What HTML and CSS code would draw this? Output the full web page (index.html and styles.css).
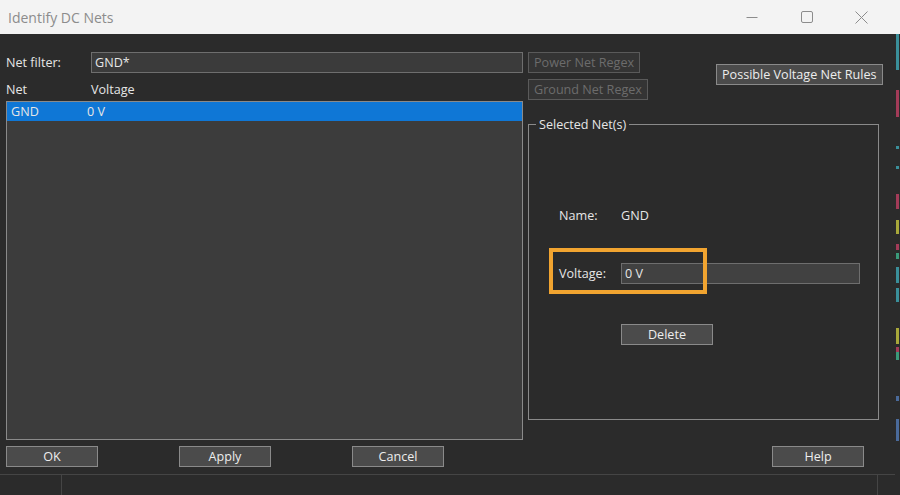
FILE: index.html
```html
<!DOCTYPE html>
<html lang="en">
<head>
    <meta charset="utf-8">
    <title>Identify DC Nets</title>
    <link rel="stylesheet" href="styles.css">
</head>
<body>
<div class="window">
    <div class="titlebar">
        <div class="title">Identify DC Nets</div>
        <div class="win-controls">
            <span class="win-btn">
                <svg width="12" height="12" viewBox="0 0 12 12"><path d="M0.5 6.5H11.5" stroke="#8c8c8c" stroke-width="1"/></svg>
            </span>
            <span class="win-btn">
                <svg width="12" height="12" viewBox="0 0 12 12"><rect x="0.5" y="0.5" width="11" height="11" rx="1.5" fill="none" stroke="#8c8c8c" stroke-width="1"/></svg>
            </span>
            <span class="win-btn">
                <svg width="13" height="13" viewBox="0 0 13 13"><path d="M0.5 0.5L12.5 12.5M12.5 0.5L0.5 12.5" stroke="#8c8c8c" stroke-width="1"/></svg>
            </span>
        </div>
    </div>

    <div class="body">
        <div class="main">
            <div class="left">
                <div class="filter-row">
                    <span class="filter-label">Net filter:</span>
                    <div class="input filter-input">GND*</div>
                </div>
                <div class="list-head">
                    <span class="col-net">Net</span>
                    <span>Voltage</span>
                </div>
                <div class="listbox">
                    <div class="list-row selected">
                        <span class="col-net">GND</span>
                        <span>0 V</span>
                    </div>
                </div>
            </div>

            <div class="right">
                <div class="right-top">
                    <div class="regex-btns">
                        <div class="btn disabled">Power Net Regex</div>
                        <div class="btn disabled">Ground Net Regex</div>
                    </div>
                    <div class="btn rules-btn">Possible Voltage Net Rules</div>
                </div>

                <fieldset class="group">
                    <legend>Selected Net(s)</legend>
                    <div class="field-row name-row">
                        <span class="field-label">Name:</span>
                        <span>GND</span>
                    </div>
                    <div class="field-row voltage-row">
                        <span class="field-label">Voltage:</span>
                        <div class="input voltage-input">0 V</div>
                        <div class="highlight"></div>
                    </div>
                    <div class="field-row delete-row">
                        <div class="btn delete-btn">Delete</div>
                    </div>
                </fieldset>
            </div>
        </div>

        <div class="footer">
            <div class="btn foot-btn">OK</div>
            <div class="btn foot-btn">Apply</div>
            <div class="btn foot-btn">Cancel</div>
            <div class="btn foot-btn help-btn">Help</div>
        </div>
    </div>

    <div class="statusbar">
        <div class="status-cell first"></div>
        <div class="status-cell grow"></div>
        <div class="status-cell last"></div>
    </div>
</div>

<div class="edge-strip">
    <i class="mk teal" style="top: 0; height: 36px"></i>
    <i class="mk red" style="top: 56px; height: 27px"></i>
    <i class="mk teal" style="top: 112px; height: 3px"></i>
    <i class="mk teal" style="top: 132px; height: 3px"></i>
    <i class="mk red" style="top: 160px; height: 15px"></i>
    <i class="mk yellow" style="top: 186px; height: 14px"></i>
    <i class="mk red" style="top: 210px; height: 6px"></i>
    <i class="mk green" style="top: 219px; height: 6px"></i>
    <i class="mk teal" style="top: 233px; height: 16px"></i>
    <i class="mk teal" style="top: 254px; height: 14px"></i>
    <i class="mk yellow" style="top: 294px; height: 16px"></i>
    <i class="mk red" style="top: 313px; height: 5px"></i>
    <i class="mk green" style="top: 318px; height: 8px"></i>
    <i class="mk blue" style="top: 362px; height: 5px"></i>
    <i class="mk blue" style="top: 385px; height: 22px"></i>
</div>
</body>
</html>
```

FILE: styles.css
```css
* {
    margin: 0;
    padding: 0;
    box-sizing: border-box;
}

html, body {
    width: 900px;
    height: 495px;
    overflow: hidden;
}

body {
    position: relative;
    background-color: #2b2b2b;
    font-family: 'Open Sans', 'Noto Sans', 'Liberation Sans', sans-serif;
    font-size: 12.6px;
    line-height: 17px;
    color: #e6e6e6;
}

.window {
    width: 895px;
    height: 495px;
    display: flex;
    flex-direction: column;
}

/* title bar */
.titlebar {
    height: 34px;
    flex: none;
    display: flex;
    align-items: center;
    background-color: #f3f3f3;
    width: 900px;
}

.title {
    padding-left: 8px;
    font-size: 14px;
    color: #8c8c8c;
    flex: 1;
}

.win-controls {
    display: flex;
    align-items: center;
    padding-right: 11px;
}

.win-btn {
    display: flex;
    width: 55px;
    justify-content: center;
}

/* dialog body */
.body {
    flex: 1;
    display: flex;
    flex-direction: column;
    padding: 18px 0 0 6px;
}

.main {
    display: flex;
    gap: 5px;
}

.left {
    width: 517px;
    display: flex;
    flex-direction: column;
}

.filter-row {
    display: flex;
    align-items: center;
    height: 21px;
}

.filter-label {
    width: 85px;
}

.input {
    height: 21px;
    line-height: 19px;
    padding-left: 3px;
    background-color: #3b3b3b;
    border: 1px solid #6e6e6e;
    color: #e6e6e6;
}

.filter-input {
    width: 432px;
}

.list-head {
    display: flex;
    height: 28px;
    align-items: center;
    padding-top: 4px;
}

.col-net {
    width: 85px;
}

.listbox {
    height: 339px;
    border: 1px solid #8a8a8a;
    background-color: #3c3c3c;
}

.list-row {
    display: flex;
    height: 19px;
    align-items: center;
    padding-left: 4px;
}

.list-row .col-net {
    width: 76px;
}

.list-row.selected {
    background-color: #0f77d6;
}

/* right column */
.right {
    width: 355px;
    display: flex;
    flex-direction: column;
}

.right-top {
    display: flex;
    height: 73px;
}

.regex-btns {
    display: flex;
    flex-direction: column;
    align-items: flex-start;
    gap: 6px;
    width: 188px;
}

.btn {
    height: 21px;
    line-height: 19px;
    padding: 0 5px;
    border: 1px solid #8a8a8a;
    background-color: #4b4b4b;
    color: #ededed;
    text-align: center;
    white-space: nowrap;
}

.btn.disabled {
    border-color: #5a5a5a;
    background-color: #343434;
    color: #6c6c6c;
}

.rules-btn {
    margin-top: 12px;
}

.group {
    width: 351px;
    height: 304px;
    border: 1px solid #8a8a8a;
    padding: 0;
    margin-top: -9px;
    position: relative;
}

.group legend {
    margin-left: 7px;
    padding: 0 3px;
    color: #e6e6e6;
}

.field-row {
    display: flex;
    align-items: center;
    padding-left: 30px;
}

.field-label {
    width: 62px;
}

.name-row {
    margin-top: 74px;
}

.voltage-row {
    margin-top: 39px;
    position: relative;
}

.voltage-input {
    width: 239px;
    height: 21px;
    background-color: #414141;
}

.highlight {
    position: absolute;
    left: 20px;
    top: -15px;
    width: 158px;
    height: 46px;
    border: 4px solid #f1a430;
    pointer-events: none;
}

.delete-row {
    margin-top: 40px;
    padding-left: 92px;
}

.delete-btn {
    width: 92px;
}

/* footer buttons */
.footer {
    display: flex;
    margin-top: 6px;
    gap: 81px;
}

.foot-btn {
    width: 92px;
}

.help-btn {
    margin-left: 247px;
}

/* status bar */
.statusbar {
    margin-top: auto;
    height: 21px;
    border-top: 1px solid #454545;
    display: flex;
}

.status-cell.first {
    width: 62px;
    border-right: 1px solid #454545;
}

.status-cell.grow {
    flex: 1;
    border-right: 1px solid #454545;
}

.status-cell.last {
    width: 17px;
}

/* strip of the window behind, at the right edge */
.edge-strip {
    position: absolute;
    top: 34px;
    right: 0;
    width: 5px;
    height: 440px;
}

.mk {
    position: absolute;
    left: 1px;
    width: 3px;
    display: block;
}

.mk.red { background-color: #a33b58; }
.mk.teal { background-color: #3a8f9a; }
.mk.yellow { background-color: #a8a83a; }
.mk.green { background-color: #3a9a7a; }
.mk.blue { background-color: #4a6a9a; }
```
